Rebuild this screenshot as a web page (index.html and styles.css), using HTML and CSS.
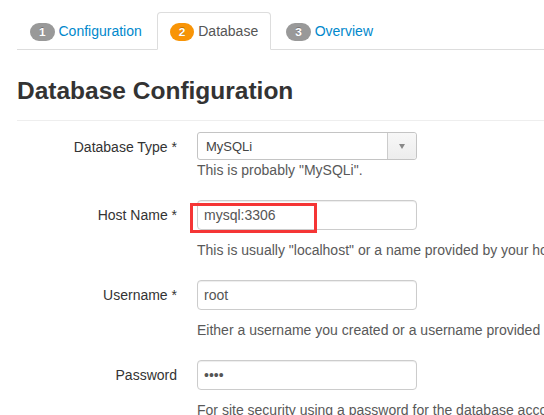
FILE: index.html
```html
<!DOCTYPE html>
<html lang="en">
<head>
<meta charset="utf-8">
<title>Database Configuration</title>
<link rel="stylesheet" href="styles.css">
</head>
<body>
<div class="page">
  <ul class="nav-tabs">
    <li><a href="#"><span class="badge">1</span> Configuration</a></li>
    <li class="active"><a href="#"><span class="badge badge-warning">2</span> Database</a></li>
    <li><a href="#"><span class="badge">3</span> Overview</a></li>
  </ul>
  <h3 class="title">Database Configuration</h3>
  <hr class="divider">
  <form class="form-horizontal">
    <div class="control-group">
      <label class="control-label">Database Type *</label>
      <div class="controls">
        <div class="chosen">
          <span class="chosen-value">MySQLi</span>
          <span class="chosen-arrow"><span class="tri"></span></span>
        </div>
        <p class="help help-tight">This is probably "MySQLi".</p>
      </div>
    </div>
    <div class="control-group">
      <label class="control-label">Host Name *</label>
      <div class="controls">
        <input class="text-input" type="text" value="mysql:3306">
        <span class="highlight"></span>
        <p class="help">This is usually "localhost" or a name provided by your host.</p>
      </div>
    </div>
    <div class="control-group">
      <label class="control-label">Username *</label>
      <div class="controls">
        <input class="text-input" type="text" value="root">
        <p class="help">Either a username you created or a username provided by your host.</p>
      </div>
    </div>
    <div class="control-group">
      <label class="control-label">Password</label>
      <div class="controls">
        <input class="text-input" type="password" value="root">
        <p class="help">For site security using a password for the database account is mandatory.</p>
      </div>
    </div>
  </form>
</div>
</body>
</html>
```
FILE: styles.css
```css
html, body {
  margin: 0;
  padding: 0;
  overflow: hidden;
  background: #fff;
}

body {
  font-family: "Liberation Sans", Arial, Helvetica, sans-serif;
  font-size: 14px;
  line-height: 20px;
  color: #333;
}

.page {
  width: 940px;
  padding: 12px 0 0 17px;
}

.nav-tabs {
  display: flex;
  list-style: none;
  margin: 0;
  padding: 0;
  border-bottom: 1px solid #ddd;
}

.nav-tabs li {
  margin: 0 2px -1px 0;
}

.nav-tabs a {
  display: block;
  padding: 8px 12px;
  line-height: 20px;
  border: 1px solid transparent;
  border-radius: 4px 4px 0 0;
  color: #0088cc;
  text-decoration: none;
  white-space: nowrap;
}

.nav-tabs .active a {
  color: #555;
  background: #fff;
  border-color: #ddd #ddd transparent;
}

.badge {
  display: inline-block;
  padding: 2px 9px;
  font-size: 11.844px;
  font-weight: bold;
  line-height: 14px;
  color: #fff;
  text-shadow: 0 -1px 0 rgba(0, 0, 0, 0.25);
  background: #999;
  border-radius: 9px;
  vertical-align: baseline;
}

.badge-warning {
  background: #f89406;
}

.title {
  margin: 20.5px 0 9.5px;
  font-size: 24.5px;
  line-height: 40px;
  font-weight: bold;
  color: #333;
}

.divider {
  margin: 0 0 10px;
  border: 0;
  border-top: 1px solid #eee;
  border-bottom: 1px solid #fff;
}

.form-horizontal {
  margin: 0;
}

.control-group {
  display: grid;
  grid-template-columns: 160px 1fr;
  column-gap: 20px;
  margin-bottom: 20px;
}

.control-label {
  padding-top: 5px;
  text-align: right;
  color: #333;
}

.controls {
  position: relative;
}

.chosen {
  display: flex;
  align-items: stretch;
  width: 220px;
  height: 28px;
  box-sizing: border-box;
  border: 1px solid #c4c4c4;
  border-radius: 3px;
  background: #fff;
}

.chosen-value {
  flex: 1;
  display: flex;
  align-items: center;
  padding: 2px 0 0 8px;
  font-size: 13px;
  color: #444;
}

.chosen-arrow {
  width: 28px;
  display: flex;
  align-items: center;
  justify-content: center;
  border-left: 1px solid #ccc;
  background: linear-gradient(#f7f7f7, #ededed);
  border-radius: 0 3px 3px 0;
}

.tri {
  width: 0;
  height: 0;
  border-left: 3.5px solid transparent;
  border-right: 3.5px solid transparent;
  border-top: 5px solid #888;
}

.text-input {
  display: block;
  width: 206px;
  height: 20px;
  padding: 4px 6px;
  margin: 0;
  font-family: "Liberation Sans", Arial, Helvetica, sans-serif;
  font-size: 14px;
  line-height: 20px;
  color: #555;
  background: #fff;
  border: 1px solid #ccc;
  border-radius: 4px;
  box-shadow: inset 0 1px 1px rgba(0, 0, 0, 0.075);
  box-sizing: content-box;
  outline: none;
}

.help {
  margin: 10px 0 0;
  color: #595959;
  white-space: nowrap;
}

.help-tight {
  margin-top: 0;
}

.highlight {
  position: absolute;
  left: -7px;
  top: 3px;
  width: 127px;
  height: 30px;
  box-sizing: border-box;
  border: 3px solid #f53535;
  pointer-events: none;
}
```
